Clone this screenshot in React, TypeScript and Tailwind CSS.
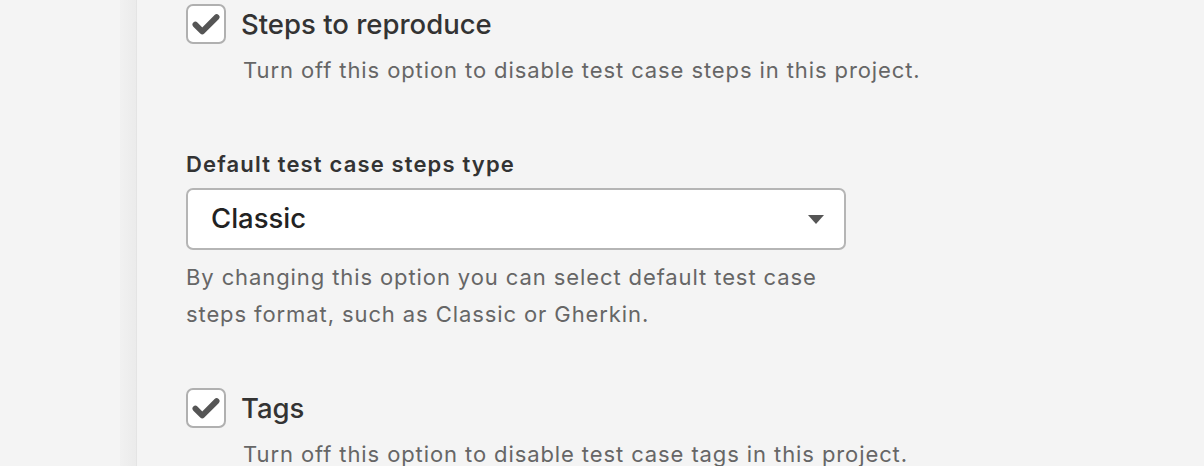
import React from 'react';

const CheckRow: React.FC<{ title: string; desc: string }> = ({ title, desc }) => (
  <div>
    <div className="flex items-center gap-[15px]">
      <div className="flex items-center justify-center w-[40px] h-[40px] rounded-[7px] border-2 border-[#b0b0b0] bg-white">
        <svg width="30" height="30" viewBox="0 0 24 24">
          <path d="M3.5 12.5 L9 18 L20.5 6.5" fill="none" stroke="#555555" strokeWidth="4.6" strokeLinecap="round" strokeLinejoin="round" />
        </svg>
      </div>
      <span className="text-[27.5px] leading-[40px] font-medium text-[#333333]">{title}</span>
    </div>
    <p className="ml-[57px] mt-[10px] text-[22px] leading-[32px] tracking-[0.9px] text-[#666666]">{desc}</p>
  </div>
);

const App: React.FC = () => {
  return (
    <div className="flex w-[1204px] h-[466px] overflow-hidden bg-[#f4f4f4] font-['Inter',sans-serif]">
      <div className="w-[120px] shrink-0" />
      <div className="w-[17px] shrink-0 bg-gradient-to-r from-[#f1f1f1] to-[#ebebeb] border-r border-[#e4e4e4]" />
      <div className="pl-[49px] pt-[4px] flex flex-col">
        <CheckRow title="Steps to reproduce" desc="Turn off this option to disable test case steps in this project." />

        <div className="mt-[66px]">
          <label className="block text-[22px] leading-[24px] tracking-[1.15px] font-semibold text-[#333333]">Default test case steps type</label>
          <div className="mt-[12px] w-[660px] h-[62px] bg-white border-2 border-[#b5b5b5] rounded-[7px] flex items-center justify-between pl-[23px] pr-[20px]">
            <span className="text-[27.5px] font-medium text-[#222222]">Classic</span>
            <svg width="16" height="9" viewBox="0 0 16 9">
              <path d="M0 0 L16 0 L8 9 Z" fill="#555555" />
            </svg>
          </div>
          <p className="mt-[9px] w-[660px] text-[22px] leading-[37px] tracking-[0.9px] text-[#666666]">
            By changing this option you can select default test case steps format, such as Classic or Gherkin.
          </p>
        </div>

        <div className="mt-[55px]">
          <CheckRow title="Tags" desc="Turn off this option to disable test case tags in this project." />
        </div>
      </div>
    </div>
  );
};

export default App;
